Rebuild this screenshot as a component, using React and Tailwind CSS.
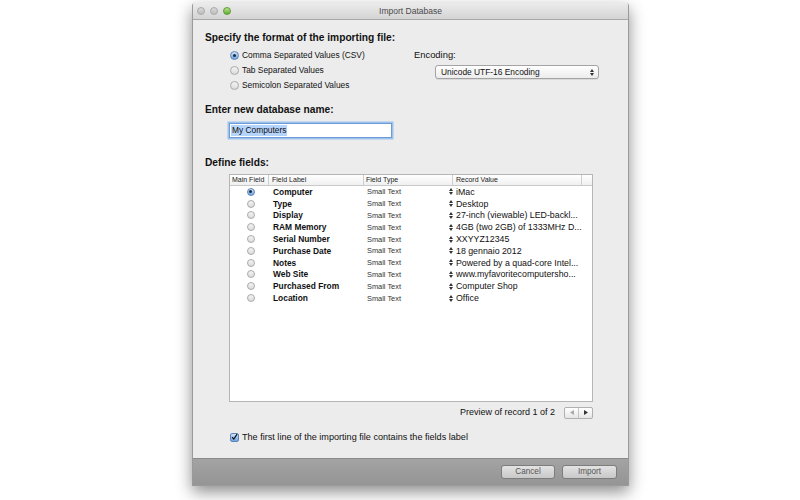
import React from "react";

const rows = [
  ["Computer", "iMac"],
  ["Type", "Desktop"],
  ["Display", "27-inch (viewable) LED-backl..."],
  ["RAM Memory", "4GB (two 2GB) of 1333MHz D..."],
  ["Serial Number", "XXYYZ12345"],
  ["Purchase Date", "18 gennaio 2012"],
  ["Notes", "Powered by a quad-core Intel..."],
  ["Web Site", "www.myfavoritecomputersho..."],
  ["Purchased From", "Computer Shop"],
  ["Location", "Office"],
];

function Radio({ on, size = 9 }) {
  return (
    <span
      className={
        "inline-flex items-center justify-center rounded-full border shrink-0 " +
        (on
          ? "border-[#5f84b8] bg-gradient-to-b from-[#cfe3fa] to-[#6fa3e0]"
          : "border-[#a9a9a9] bg-gradient-to-b from-[#f4f4f4] to-[#dcdcdc]")
      }
      style={{ width: size, height: size }}
    >
      {on && <span className="w-[3px] h-[3px] rounded-full bg-[#1d2b40]" />}
    </span>
  );
}

function UpDown() {
  return (
    <svg width="4" height="7" viewBox="0 0 4 7" className="shrink-0">
      <path d="M0 3 L2 0 L4 3 Z" fill="#333" />
      <path d="M0 4 L2 7 L4 4 Z" fill="#333" />
    </svg>
  );
}

export default function App() {
  return (
    <div
      className="w-[800px] h-[500px] bg-white overflow-hidden text-[#111] pt-[3px]"
      style={{ fontFamily: '"Liberation Sans", Arial, sans-serif' }}
    >
      <div className="ml-[192px] w-[437px] h-[483px] flex flex-col shadow-[0_6px_16px_rgba(0,0,0,0.45)] border border-[#9a9a9a] border-t-0 rounded-t-[3px] overflow-hidden">
        {/* title bar */}
        <div className="h-[17px] shrink-0 bg-gradient-to-b from-[#ececec] to-[#d4d4d4] border-b border-[#a8a8a8] flex items-center relative">
          <div className="flex items-center gap-[5px] pl-[4px]">
            <span className="w-[8px] h-[8px] rounded-full bg-gradient-to-b from-[#d9d9d9] to-[#bdbdbd] border border-[#a9a9a9]" />
            <span className="w-[8px] h-[8px] rounded-full bg-gradient-to-b from-[#d9d9d9] to-[#bdbdbd] border border-[#a9a9a9]" />
            <span className="w-[8px] h-[8px] rounded-full bg-gradient-to-b from-[#b6e38d] to-[#5fae2c] border border-[#5e9a34]" />
          </div>
          <div className="absolute inset-0 flex items-center justify-center text-[8.5px] text-[#4a4a4a]">
            Import Database
          </div>
        </div>

        {/* body */}
        <div className="flex-1 bg-[#ececec] flex flex-col pl-[12px] pr-[0px]">
          <div className="mt-[12px] flex">
            <div className="w-[209px]">
              <div className="text-[10.2px] font-bold leading-[12px]">
                Specify the format of the importing file:
              </div>
              <div className="mt-[6px] pl-[25px] flex flex-col gap-[5px] text-[8.4px]">
                <div className="flex items-center gap-[3px] h-[10px]">
                  <Radio on />
                  <span>Comma Separated Values (CSV)</span>
                </div>
                <div className="flex items-center gap-[3px] h-[10px]">
                  <Radio />
                  <span>Tab Separated Values</span>
                </div>
                <div className="flex items-center gap-[3px] h-[10px]">
                  <Radio />
                  <span>Semicolon Separated Values</span>
                </div>
              </div>
            </div>
            <div className="pt-[18px]">
              <div className="text-[9.4px] leading-[10px]">Encoding:</div>
              <div className="mt-[5px] ml-[21px] w-[164px] h-[14px] rounded-[3px] border border-[#a3a3a3] bg-gradient-to-b from-[#ffffff] to-[#ececec] flex items-center pl-[5px] pr-[4px] text-[8.4px] shadow-[0_1px_0_rgba(0,0,0,0.08)]">
                <span className="flex-1">Unicode UTF-16 Encoding</span>
                <UpDown />
              </div>
            </div>
          </div>

          <div className="mt-[14px] text-[10.2px] font-bold leading-[12px]">
            Enter new database name:
          </div>
          <div className="mt-[7px] ml-[24px] w-[163px] h-[15px] bg-white border border-[#6d9bd6] shadow-[0_0_0_1.5px_#9ec2ee] flex items-center pl-[1px]">
            <span className="bg-[#b5d4fb] text-[8.4px] px-[1px] leading-[11px]">My Computers</span>
          </div>

          <div className="mt-[19px] text-[10.2px] font-bold leading-[12px]">
            Define fields:
          </div>

          {/* table */}
          <div className="mt-[5px] ml-[24px] w-[364px] h-[228px] bg-white border border-[#b5b5b5] flex flex-col">
            <div className="h-[11px] shrink-0 flex items-center border-b border-[#c9c9c9] bg-gradient-to-b from-[#ffffff] to-[#f0f0f0] text-[7px] text-[#222]">
              <div className="w-[39px] pl-[2px] border-r border-[#cfcfcf] h-full flex items-center">Main Field</div>
              <div className="w-[95px] pl-[3px] border-r border-[#cfcfcf] h-full flex items-center">Field Label</div>
              <div className="w-[89px] pl-[2px] border-r border-[#cfcfcf] h-full flex items-center">Field Type</div>
              <div className="w-[129px] pl-[3px] border-r border-[#cfcfcf] h-full flex items-center">Record Value</div>
              <div className="flex-1" />
            </div>
            <div className="flex flex-col">
              {rows.map(([label, val], i) => (
                <div key={label} className="h-[11.8px] flex items-center leading-[10px]">
                  <div className="w-[39px] flex justify-center pl-[2px]">
                    <Radio on={i === 0} size={8} />
                  </div>
                  <div className="w-[95px] pl-[4px] text-[8.4px] font-bold">{label}</div>
                  <div className="w-[85px] pl-[3px] text-[7.4px] text-[#333] pt-[1px]">Small Text</div>
                  <div className="flex items-center gap-[3px] text-[8.8px] whitespace-nowrap">
                    <UpDown />
                    <span>{val}</span>
                  </div>
                </div>
              ))}
            </div>
          </div>

          <div className="mt-[4px] ml-[24px] w-[364px] flex items-center justify-end gap-[9px]">
            <span className="text-[9px]">Preview of record 1 of 2</span>
            <div className="w-[29px] h-[12px] border border-[#b0b0b0] rounded-[2px] bg-gradient-to-b from-white to-[#e6e6e6] flex">
              <div className="flex-1 flex items-center justify-center border-r border-[#c4c4c4]">
                <svg width="4" height="5" viewBox="0 0 4 5"><path d="M4 0 L0 2.5 L4 5 Z" fill="#aaa" /></svg>
              </div>
              <div className="flex-1 flex items-center justify-center">
                <svg width="4" height="5" viewBox="0 0 4 5"><path d="M0 0 L4 2.5 L0 5 Z" fill="#333" /></svg>
              </div>
            </div>
          </div>

          <div className="mt-[11px] ml-[25px] flex items-center gap-[3px]">
            <span className="w-[9px] h-[9px] rounded-[2px] border border-[#5f84b8] bg-gradient-to-b from-[#cfe3fa] to-[#6fa3e0] flex items-center justify-center">
              <svg width="8" height="8" viewBox="0 0 8 8">
                <path d="M1.2 4.2 L3.2 6.4 L7 0.8" stroke="#111" strokeWidth="1.4" fill="none" />
              </svg>
            </span>
            <span className="text-[9.1px]">The first line of the importing file contains the fields label</span>
          </div>
          <div className="flex-1" />
        </div>

        {/* bottom bar */}
        <div className="h-[27px] shrink-0 bg-gradient-to-b from-[#a3a3a3] to-[#959595] border-t border-[#8a8a8a] flex items-center justify-end gap-[7px] pr-[11px]">
          <div className="w-[54px] h-[14px] rounded-[3px] border border-[#7d7d7d] bg-gradient-to-b from-[#e3e3e3] to-[#c8c8c8] flex items-center justify-center text-[8.2px] text-[#555]">
            Cancel
          </div>
          <div className="w-[55px] h-[14px] rounded-[3px] border border-[#7d7d7d] bg-gradient-to-b from-[#e3e3e3] to-[#c8c8c8] flex items-center justify-center text-[8.2px] text-[#555]">
            Import
          </div>
        </div>
      </div>
    </div>
  );
}
